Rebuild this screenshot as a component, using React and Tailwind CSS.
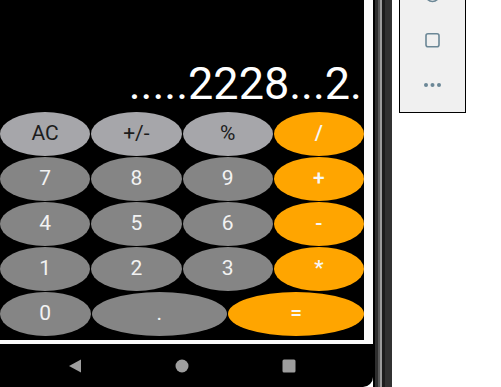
import React from "react";

const LIGHT = "bg-[#a6a6aa] text-[#1c1c1c]";
const DARK = "bg-[#858585] text-[#f2f2f2]";
const ORANGE = "bg-[#ffa500] text-[#f7f7f7] font-medium";

function Btn({ label, cls, grow = "flex-1" }) {
  return (
    <div className={`${grow} h-[44px] rounded-[50%] flex items-center justify-center text-[21px] ${cls}`}>
      {label}
    </div>
  );
}

export default function App() {
  const rows = [
    [["AC", LIGHT], ["+/-", LIGHT], ["%", LIGHT], ["/", ORANGE]],
    [["7", DARK], ["8", DARK], ["9", DARK], ["+", ORANGE]],
    [["4", DARK], ["5", DARK], ["6", DARK], ["-", ORANGE]],
    [["1", DARK], ["2", DARK], ["3", DARK], ["*", ORANGE]],
  ];
  return (
    <div
      className="w-[501px] h-[387px] bg-white flex overflow-hidden"
      style={{ fontFamily: "Roboto, 'Noto Sans', sans-serif" }}
    >
      {/* phone */}
      <div className="w-[373px] flex flex-col shrink-0">
        <div className="h-[344px] bg-[#fafafa] pr-[9px] pb-[4px]">
          <div className="w-[364px] h-[340px] bg-black flex flex-col">
            <div className="h-[112px] flex items-end justify-end pr-[2px] pb-[6px] overflow-hidden">
              <span className="text-[45px] leading-none text-white whitespace-nowrap">.....2228...2.</span>
            </div>
            {rows.map((r, i) => (
              <div key={i} className="flex h-[45px] gap-[1px]">
                {r.map(([l, c]) => (
                  <Btn key={l} label={l} cls={c} />
                ))}
              </div>
            ))}
            <div className="flex h-[45px] gap-[1px]">
              <Btn label="0" cls={DARK} grow="flex-[2]" />
              <Btn label="." cls={DARK} grow="flex-[3]" />
              <Btn label="=" cls={ORANGE} grow="flex-[3]" />
            </div>
          </div>
        </div>
        <div className="h-[43px] bg-black rounded-br-[10px]">
          <div className="w-[364px] h-full flex items-center justify-center gap-[93px]">
            <svg width="14" height="14" viewBox="0 0 14 14">
              <polygon points="13,0.5 13,13.5 1,7" fill="#9e9e9e" />
            </svg>
            <svg width="14" height="14" viewBox="0 0 14 14">
              <circle cx="7" cy="7" r="6.5" fill="#9e9e9e" />
            </svg>
            <svg width="14" height="14" viewBox="0 0 14 14">
              <rect x="0.5" y="0.5" width="13" height="13" rx="1.5" fill="#9e9e9e" />
            </svg>
          </div>
        </div>
      </div>
      {/* phone edge */}
      <div className="flex shrink-0 h-full">
        <div className="w-[2px] bg-black" />
        <div className="w-[3px] bg-[#2e2e2e]" />
        <div className="w-[2px] bg-[#575757]" />
        <div className="w-[2px] bg-[#9c9c9c]" />
        <div className="w-[3px] bg-[#1c1c1c]" />
        <div className="w-[7px] bg-[#313131]" />
      </div>
      <div className="w-[7px] shrink-0" />
      {/* side toolbar */}
      <div className="w-[67px] h-[113px] shrink-0 border-x border-b border-black bg-[#f0f0f0]">
        <svg width="65" height="112" viewBox="0 0 65 112">
          <circle cx="32.5" cy="-5" r="6.5" fill="none" stroke="#6b8796" strokeWidth="1.6" />
          <rect x="26" y="33.8" width="13" height="13" rx="2" fill="none" stroke="#6b8796" strokeWidth="1.6" />
          <circle cx="26" cy="85" r="2" fill="#6b8796" />
          <circle cx="32.5" cy="85" r="2" fill="#6b8796" />
          <circle cx="39" cy="85" r="2" fill="#6b8796" />
        </svg>
      </div>
    </div>
  );
}
